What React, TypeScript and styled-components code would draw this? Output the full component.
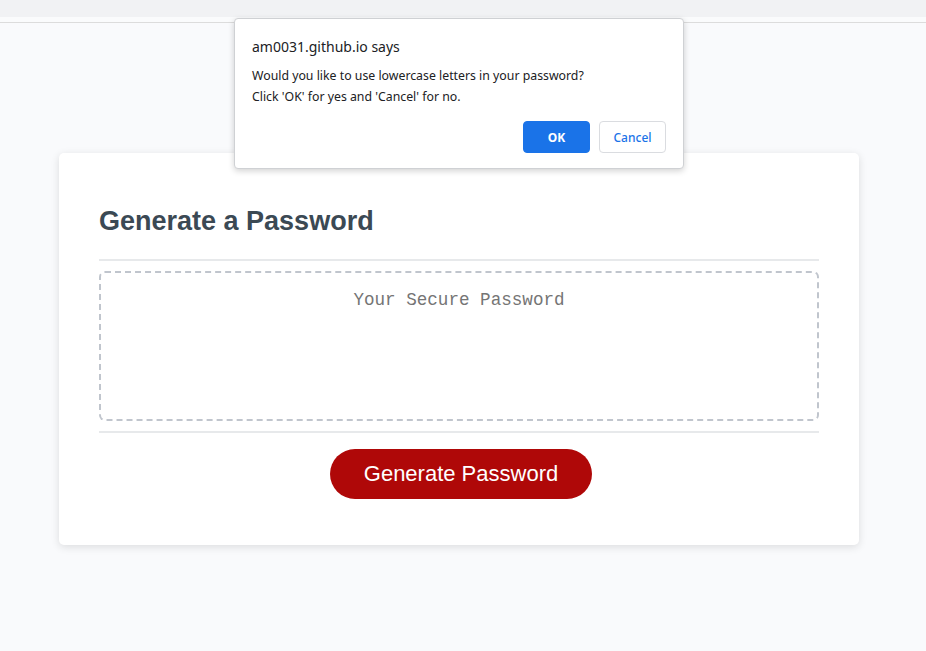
import styled, { createGlobalStyle } from "styled-components"

const GlobalStyle = createGlobalStyle`
  html, body {
    margin: 0;
    padding: 0;
  }
  body {
    background: #f9fafc;
    font-family: "Liberation Sans", Arial, sans-serif;
    color: hsl(206, 17%, 28%);
  }
  * {
    box-sizing: border-box;
  }
`

const App = () => {
  return (
    <Page>
      <GlobalStyle />
      <Chrome />
      <Wrapper>
        <PageTitle>Password Generator</PageTitle>
        <Card>
          <CardHeader>
            <h2>Generate a Password</h2>
          </CardHeader>
          <CardBody>
            <PasswordBox
              readOnly
              placeholder="Your Secure Password"
              aria-label="Generated Password"
            />
          </CardBody>
          <CardFooter>
            <GenerateButton>Generate Password</GenerateButton>
          </CardFooter>
        </Card>
      </Wrapper>

      <Dialog role="alertdialog">
        <DialogTitle>am0031.github.io says</DialogTitle>
        <DialogText>
          Would you like to use lowercase letters in your password?
          <br />
          Click 'OK' for yes and 'Cancel' for no.
        </DialogText>
        <DialogActions>
          <DialogButton $primary>OK</DialogButton>
          <DialogButton>Cancel</DialogButton>
        </DialogActions>
      </Dialog>
    </Page>
  )
}

export default App

const Page = styled.div`
  position: relative;
  width: 100%;
  min-height: 651px;
  overflow: hidden;
`

const Chrome = styled.div`
  height: 23px;
  background: #fafbfc;
  border-top: 17px solid #f1f2f4;
  border-bottom: 1px solid #dcdcdc;
`

/* the page in the shot is laid out 8px narrower (scrollbar room) */
const Wrapper = styled.div`
  padding: 30px 28px 0 20px;
`

const PageTitle = styled.h1`
  margin: 0;
  padding: 20px 0;
  height: 100px;
  text-align: center;
  font-size: 32px;
  visibility: hidden;
`

const Card = styled.div`
  max-width: 800px;
  margin: 0 auto;
  padding: 30px 40px;
  background: #fff;
  border-radius: 5px;
  box-shadow: rgba(0, 0, 0, 0.12) 0px 2px 8px 0px;
  font-size: 18px;
`

const Divider = `
  content: " ";
  display: block;
  width: 100%;
  height: 2px;
  background: #e7e9eb;
`

const CardHeader = styled.div`
  &::after {
    ${Divider}
  }

  h2 {
    margin: 22px 0 22px;
    font-size: 27px;
    line-height: 32px;
    font-weight: 700;
    color: hsl(206, 17%, 28%);
  }
`

const CardBody = styled.div`
  min-height: 100px;
`

const PasswordBox = styled.textarea`
  appearance: none;
  display: block;
  width: 100%;
  height: 150px;
  margin: 10px 0;
  padding: 16px 15px 85px;
  border: 2px dashed #c0c5cd;
  border-radius: 6px;
  resize: none;
  overflow: hidden;
  outline: none;
  text-align: center;
  font-family: "Liberation Mono", "DejaVu Sans Mono", monospace;
  font-size: 17.6px;
  line-height: 23px;

  &::placeholder {
    color: #757575;
  }
`

const CardFooter = styled.div`
  text-align: center;

  &::before {
    ${Divider}
  }
`

const GenerateButton = styled.button`
  display: inline-block;
  margin: 16px 0 16px 4px;
  padding: 14px 34px;
  border: none;
  border-radius: 25px;
  background: hsl(360, 91%, 36%);
  color: #fff;
  font-family: "Liberation Sans", Arial, sans-serif;
  font-size: 22px;
  line-height: 22px;
  cursor: pointer;
`

const Dialog = styled.div`
  position: absolute;
  top: 18px;
  left: 234px;
  width: 450px;
  height: 151px;
  padding: 19px 17px 16px;
  background: #fff;
  border: 1px solid #cfd1d4;
  border-radius: 4px;
  box-shadow: 0 2px 6px rgba(0, 0, 0, 0.18);
  font-family: "Noto Sans", "Open Sans", sans-serif;
  color: #202124;
`

const DialogTitle = styled.div`
  font-size: 14px;
  line-height: 18px;
`

const DialogText = styled.div`
  margin-top: 9px;
  font-size: 12.3px;
  line-height: 21px;
`

const DialogActions = styled.div`
  display: flex;
  justify-content: flex-end;
  gap: 9px;
  margin-top: 14px;
`

const DialogButton = styled.button<{ $primary?: boolean }>`
  width: 67px;
  height: 32px;
  border-radius: 4px;
  border: 1px solid ${(p) => (p.$primary ? "#1a73e8" : "#dadce0")};
  background: ${(p) => (p.$primary ? "#1a73e8" : "#fff")};
  color: ${(p) => (p.$primary ? "#fff" : "#1a73e8")};
  font-family: "Noto Sans", "Open Sans", sans-serif;
  font-size: 12px;
  font-weight: ${(p) => (p.$primary ? 700 : 500)};
  cursor: pointer;
`
